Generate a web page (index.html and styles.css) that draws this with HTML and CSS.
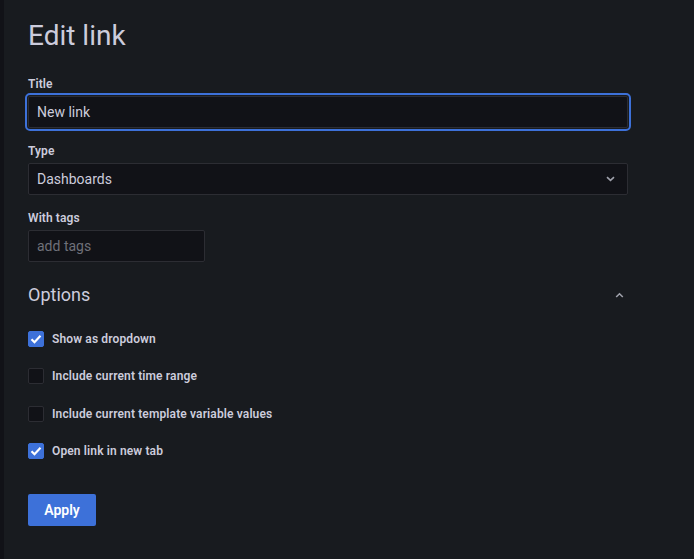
FILE: index.html
```html
<!DOCTYPE html>
<html lang="en">
<head>
<meta charset="utf-8">
<title>Edit link</title>
<link rel="stylesheet" href="styles.css">
</head>
<body>
<div class="strip"></div>
<main class="page">
  <h1 class="title">Edit link</h1>

  <div class="field">
    <label class="label">Title</label>
    <div class="input focused">New link</div>
  </div>

  <div class="field">
    <label class="label">Type</label>
    <div class="input select">
      <span>Dashboards</span>
      <svg class="chev" width="9" height="6" viewBox="0 0 9 6"><path d="M1 1.2l3.5 3.2L8 1.2" fill="none" stroke="#9fa1ab" stroke-width="1.6"/></svg>
    </div>
  </div>

  <div class="field">
    <label class="label">With tags</label>
    <div class="input tags">add tags</div>
  </div>

  <div class="options-head">
    <span class="options-title">Options</span>
    <svg class="chev-up" width="9" height="6" viewBox="0 0 9 6"><path d="M1.2 5L4.5 1.8 7.8 5" fill="none" stroke="#9fa1ab" stroke-width="1.6"/></svg>
  </div>

  <div class="checks">
    <div class="check-row">
      <span class="box on"><svg width="12" height="10" viewBox="0 0 12 10"><path d="M1.5 5.2l3 3L10.5 1.8" fill="none" stroke="#fff" stroke-width="2.2"/></svg></span>
      <span class="check-label">Show as dropdown</span>
    </div>
    <div class="check-row">
      <span class="box"></span>
      <span class="check-label">Include current time range</span>
    </div>
    <div class="check-row">
      <span class="box"></span>
      <span class="check-label">Include current template variable values</span>
    </div>
    <div class="check-row">
      <span class="box on"><svg width="12" height="10" viewBox="0 0 12 10"><path d="M1.5 5.2l3 3L10.5 1.8" fill="none" stroke="#fff" stroke-width="2.2"/></svg></span>
      <span class="check-label">Open link in new tab</span>
    </div>
  </div>

  <button class="apply">Apply</button>
</main>
</body>
</html>
```

FILE: styles.css
```css
html, body {
  margin: 0;
  padding: 0;
  height: 100%;
}
body {
  background: #181b1f;
  color: #ccccdc;
  font-family: Roboto, "Liberation Sans", sans-serif;
  display: flex;
  min-height: 559px;
}
.strip {
  width: 4px;
  background: #111217;
  flex: none;
}
.page {
  flex: 1;
  padding: 0 0 0 24px;
  width: 600px;
  display: flex;
  flex-direction: column;
  align-items: flex-start;
}
.title {
  margin: 17px 0 0 0;
  font-size: 28px;
  font-weight: 400;
  line-height: 38px;
  height: 38px;
}
.field {
  display: flex;
  flex-direction: column;
  margin-top: 21px;
  width: 600px;
}
.field + .field {
  margin-top: 15px;
}
.label {
  font-size: 12px;
  font-weight: 600;
  line-height: 16px;
  height: 16px;
  margin-bottom: 4px;
  letter-spacing: 0.1px;
}
.input {
  box-sizing: border-box;
  height: 32px;
  background: #111217;
  border: 1px solid #2c2d33;
  border-radius: 2px;
  padding: 0 8px;
  font-size: 14px;
  line-height: 30px;
  color: #ccccdc;
}
.focused {
  outline: 2px solid #3d71d9;
  outline-offset: 1px;
  border-radius: 2px;
}
.select {
  display: flex;
  align-items: center;
  justify-content: space-between;
  padding-right: 12px;
}
.tags {
  width: 177px;
  color: #6f7079;
}
.options-head {
  margin-top: 16px;
  width: 600px;
  height: 34px;
  display: flex;
  align-items: center;
  justify-content: space-between;
}
.options-title {
  font-size: 18px;
  font-weight: 400;
  line-height: 24px;
}
.chev-up {
  margin-right: 4px;
}
.checks {
  margin-top: 19px;
  display: flex;
  flex-direction: column;
  gap: 21.33px;
}
.check-row {
  display: flex;
  align-items: center;
  height: 16px;
}
.box {
  box-sizing: border-box;
  width: 16px;
  height: 16px;
  border-radius: 2px;
  background: #111217;
  border: 1px solid #2c2d33;
  display: flex;
  align-items: center;
  justify-content: center;
}
.box.on {
  background: #3d71d9;
  border-color: #3d71d9;
}
.check-label {
  margin-left: 8px;
  font-size: 12px;
  font-weight: 600;
  line-height: 16px;
  letter-spacing: 0.13px;
}
.apply {
  margin-top: 35px;
  height: 32px;
  width: 68px;
  border: none;
  border-radius: 2px;
  background: #3d71d9;
  color: #ffffff;
  font-family: Roboto, "Liberation Sans", sans-serif;
  font-size: 14px;
  font-weight: 600;
  padding: 0;
}
```
